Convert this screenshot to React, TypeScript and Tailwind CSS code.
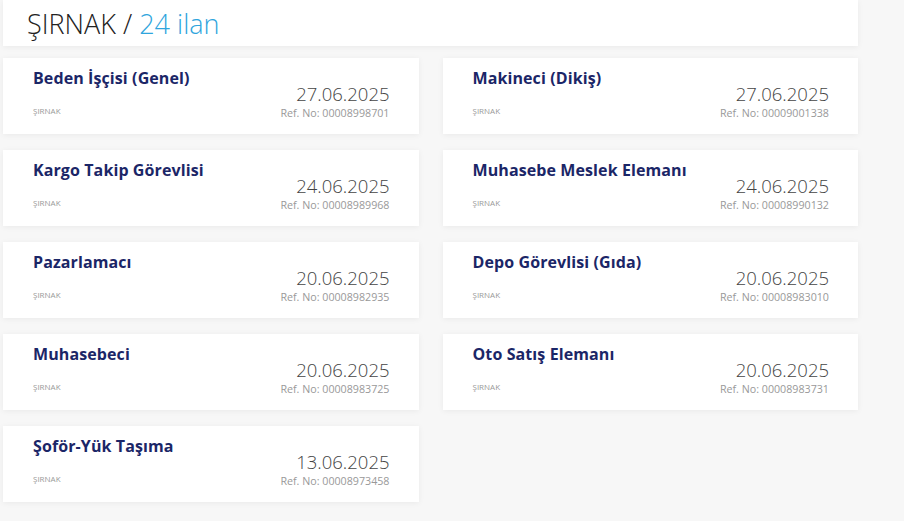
import React from 'react';

interface Job {
  title: string;
  date: string;
  ref: string;
}

const jobs: Job[] = [
  { title: 'Beden İşçisi (Genel)', date: '27.06.2025', ref: '00008998701' },
  { title: 'Makineci (Dikiş)', date: '27.06.2025', ref: '00009001338' },
  { title: 'Kargo Takip Görevlisi', date: '24.06.2025', ref: '00008989968' },
  { title: 'Muhasebe Meslek Elemanı', date: '24.06.2025', ref: '00008990132' },
  { title: 'Pazarlamacı', date: '20.06.2025', ref: '00008982935' },
  { title: 'Depo Görevlisi (Gıda)', date: '20.06.2025', ref: '00008983010' },
  { title: 'Muhasebeci', date: '20.06.2025', ref: '00008983725' },
  { title: 'Oto Satış Elemanı', date: '20.06.2025', ref: '00008983731' },
  { title: 'Şoför-Yük Taşıma', date: '13.06.2025', ref: '00008973458' },
];

function JobCard({ job }: { job: Job }) {
  return (
    <div className="h-[76px] bg-white shadow-[0_1px_6px_rgba(0,0,0,0.06)] pl-[30px] pr-[29px] pt-[9px] flex justify-between">
      <div className="flex flex-col">
        <h3 className="text-[16px] leading-[22px] font-bold text-[#1b2667] tracking-[0.1px]">{job.title}</h3>
        <span className="mt-[17px] text-[8px] leading-[10px] text-[#999]">ŞIRNAK</span>
      </div>
      <div className="flex flex-col items-end pt-[15px]">
        <span className="text-[18.5px] leading-[24px] font-light text-[#444]">{job.date}</span>
        <span className="text-[10.7px] leading-[14px] text-[#999]">Ref. No: {job.ref}</span>
      </div>
    </div>
  );
}

export default function App() {
  return (
    <div className="min-h-screen w-[904px] h-[521px] overflow-hidden bg-[#f7f7f7] pl-[3px] font-['Open_Sans',sans-serif]">
      <div className="w-[855px]">
        {/* Header */}
        <div className="h-[46px] bg-white shadow-[0_1px_6px_rgba(0,0,0,0.06)] pl-[24px] flex items-center">
          <h1 className="text-[27px] font-light text-[#222] leading-none">
            ŞIRNAK / <span className="text-[#2fa5dd]">24 ilan</span>
          </h1>
        </div>

        {/* Listing */}
        <div className="mt-[12px] grid grid-cols-2 gap-x-[24px] gap-y-[16px]">
          {jobs.map((job) => (
            <JobCard key={job.ref} job={job} />
          ))}
        </div>
      </div>
    </div>
  );
}
